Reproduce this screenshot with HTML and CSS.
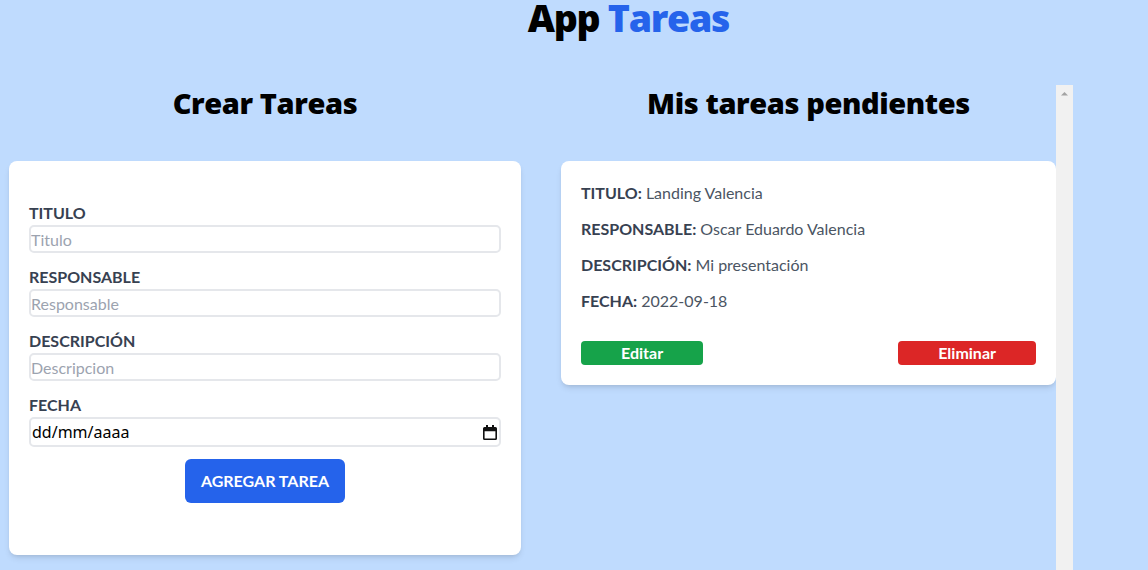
FILE: index.html
```html
<!DOCTYPE html>
<html lang="es">
<head>
<meta charset="utf-8">
<title>App Tareas</title>
<link rel="stylesheet" href="styles.css">
</head>
<body>
<h1 class="app-title">App <span class="accent">Tareas</span></h1>
<main class="columns">
  <section class="column">
    <h2 class="column-title">Crear Tareas</h2>
    <form class="card form-card">
      <div class="field">
        <label class="field-label" for="titulo">TITULO</label>
        <input class="field-input" id="titulo" type="text" placeholder="Titulo">
      </div>
      <div class="field">
        <label class="field-label" for="responsable">RESPONSABLE</label>
        <input class="field-input" id="responsable" type="text" placeholder="Responsable">
      </div>
      <div class="field">
        <label class="field-label" for="descripcion">DESCRIPCIÓN</label>
        <input class="field-input" id="descripcion" type="text" placeholder="Descripcion">
      </div>
      <div class="field">
        <label class="field-label" for="fecha">FECHA</label>
        <div class="date-wrap">
          <input class="field-input date-input" id="fecha" type="text" placeholder="dd/mm/aaaa">
          <svg class="date-icon" width="14" height="15" viewBox="0 0 14 15" aria-hidden="true">
            <path fill="#111" fill-rule="evenodd" d="M3 0h2v2h4V0h2v2h1.5A1.5 1.5 0 0 1 14 3.5v10A1.5 1.5 0 0 1 12.5 15h-11A1.5 1.5 0 0 1 0 13.5v-10A1.5 1.5 0 0 1 1.5 2H3zM1.6 6.2v7.2h10.8V6.2z"/>
          </svg>
        </div>
      </div>
      <div class="actions">
        <button class="btn-add" type="button">AGREGAR TAREA</button>
      </div>
    </form>
  </section>
  <section class="column tasks">
    <div class="tasks-scroll">
      <h2 class="column-title">Mis tareas pendientes</h2>
      <article class="card task-card">
        <p class="task-row"><strong>TITULO:</strong> Landing Valencia</p>
        <p class="task-row"><strong>RESPONSABLE:</strong> Oscar Eduardo Valencia</p>
        <p class="task-row"><strong>DESCRIPCIÓN:</strong> Mi presentación</p>
        <p class="task-row"><strong>FECHA:</strong> 2022-09-18</p>
        <div class="task-buttons">
          <button class="btn-small btn-edit" type="button">Editar</button>
          <button class="btn-small btn-delete" type="button">Eliminar</button>
        </div>
      </article>
    </div>
    <div class="scrollbar" aria-hidden="true">
      <svg class="scroll-arrow" width="17" height="17" viewBox="0 0 17 17"><path d="M5 10.5h7L8.5 7z" fill="#a3a3a3"/></svg>
    </div>
  </section>
</main>
</body>
</html>
```
FILE: styles.css
```css
html, body {
  margin: 0;
  padding: 0;
}
body {
  background: #bfdbfe;
  font-family: "Lato", "Open Sans", sans-serif;
  color: #000;
}
.app-title {
  margin: 0;
  padding-left: 109px;
  text-align: center;
  font-family: "Open Sans", "Noto Sans", sans-serif;
  font-size: 37.5px;
  line-height: 36px;
  font-weight: 800;
  letter-spacing: -1.3px;
}
.accent { color: #2563eb; }
.columns {
  display: flex;
  gap: 40px;
  margin-top: 49px;
  padding-left: 9px;
}
.column {
  width: 512px;
  flex: none;
}
.tasks {
  display: flex;
  height: 485px;
}
.tasks-scroll {
  flex: 1;
  min-width: 0;
}
.scrollbar {
  width: 17px;
  flex: none;
  background: #f1f1f1;
}
.scroll-arrow { display: block; }
.column-title {
  margin: 0 0 40px;
  text-align: center;
  font-family: "Open Sans", "Noto Sans", sans-serif;
  font-size: 29px;
  line-height: 36px;
  font-weight: 800;
  letter-spacing: -0.4px;
}
.card {
  background: #fff;
  border-radius: 8px;
  box-shadow: 0 4px 6px -1px rgba(0,0,0,.1), 0 2px 4px -2px rgba(0,0,0,.1);
}
.form-card {
  padding: 40px 20px 52px;
}
.field { margin-bottom: 12px; }
.field-label {
  display: block;
  font-size: 16px;
  line-height: 24px;
  font-weight: 700;
  color: #374151;
}
.field-input {
  display: block;
  box-sizing: border-box;
  width: 100%;
  height: 28px;
  margin: 0;
  padding: 0;
  border: 2px solid #e5e7eb;
  border-radius: 5px;
  font-family: inherit;
  font-size: 16px;
  line-height: 24px;
  color: #111;
  background: #fff;
  outline: none;
}
.field-input::placeholder { color: #9ca3af; }
.date-wrap { position: relative; }
.date-input { height: 30px; padding-left: 1px; font-family: "Noto Sans", sans-serif; }
.date-input::placeholder { color: #000; }
.date-icon {
  position: absolute;
  right: 4px;
  top: 8px;
}
.actions {
  display: flex;
  justify-content: center;
}
.btn-add {
  margin: 0;
  padding: 10px 16px;
  border: 0;
  border-radius: 6px;
  background: #2563eb;
  color: #fff;
  font-family: inherit;
  font-size: 16px;
  line-height: 24px;
  font-weight: 700;
}
.task-card {
  padding: 20px;
}
.task-row {
  margin: 0 0 12px;
  font-size: 16px;
  line-height: 24px;
  color: #4b5563;
}
.task-row strong {
  font-weight: 700;
  color: #374151;
}
.task-buttons {
  display: flex;
  justify-content: space-between;
  margin-top: 28px;
}
.btn-small {
  margin: 0;
  padding: 0 40px;
  height: 24px;
  border: 0;
  border-radius: 4px;
  color: #fff;
  font-family: inherit;
  font-size: 16px;
  line-height: 24px;
  font-weight: 700;
}
.btn-edit { background: #16a34a; }
.btn-delete { background: #dc2626; }
```
